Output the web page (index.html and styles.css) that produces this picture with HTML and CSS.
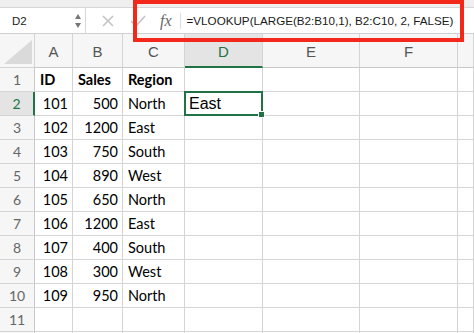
FILE: index.html
```html
<!DOCTYPE html>
<html lang="en">
<head>
    <meta charset="UTF-8">
    <meta name="viewport" content="width=device-width, initial-scale=1.0">
    <title>VLOOKUP LARGE</title>
    <link rel="stylesheet" href="styles.css">
</head>
<body>
    <div class="top-strip"></div>
    <div class="formula-bar">
        <div class="name-box">
            <span class="cell-ref">D2</span>
            <span class="spinner">
                <span class="arrow-up"></span>
                <span class="arrow-down"></span>
            </span>
        </div>
        <div class="fb-buttons">
            <svg class="fb-icon" width="12" height="12" viewBox="0 0 12 12">
                <path d="M1 1 L11 11 M11 1 L1 11" stroke="#c4c4c4" stroke-width="1.6" fill="none"/>
            </svg>
            <svg class="fb-icon check" width="16" height="12" viewBox="0 0 16 12">
                <path d="M1 6 L6 11 L15 1" stroke="#c4c4c4" stroke-width="1.6" fill="none"/>
            </svg>
        </div>
        <div class="fx">fx</div>
        <div class="formula">=VLOOKUP(LARGE(B2:B10,1), B2:C10, 2, FALSE)</div>
    </div>
    <div class="highlight-box"></div>

    <div class="sheet">
        <div class="corner">
            <svg width="28" height="24" viewBox="0 0 28 24">
                <polygon points="28,0 28,24 0,24" fill="#dadada"/>
            </svg>
        </div>
        <div class="col-head">A</div>
        <div class="col-head">B</div>
        <div class="col-head">C</div>
        <div class="col-head active">D</div>
        <div class="col-head">E</div>
        <div class="col-head">F</div>
        <div class="col-head"></div>

        <div class="row-head">1</div>
        <div class="cell bold">ID</div>
        <div class="cell bold">Sales</div>
        <div class="cell bold">Region</div>
        <div class="cell"></div><div class="cell"></div><div class="cell"></div><div class="cell"></div>

        <div class="row-head active">2</div>
        <div class="cell num">101</div>
        <div class="cell num">500</div>
        <div class="cell">North</div>
        <div class="cell selected">East<span class="fill-handle"></span></div>
        <div class="cell"></div><div class="cell"></div><div class="cell"></div>

        <div class="row-head">3</div>
        <div class="cell num">102</div>
        <div class="cell num">1200</div>
        <div class="cell">East</div>
        <div class="cell"></div><div class="cell"></div><div class="cell"></div><div class="cell"></div>

        <div class="row-head">4</div>
        <div class="cell num">103</div>
        <div class="cell num">750</div>
        <div class="cell">South</div>
        <div class="cell"></div><div class="cell"></div><div class="cell"></div><div class="cell"></div>

        <div class="row-head">5</div>
        <div class="cell num">104</div>
        <div class="cell num">890</div>
        <div class="cell">West</div>
        <div class="cell"></div><div class="cell"></div><div class="cell"></div><div class="cell"></div>

        <div class="row-head">6</div>
        <div class="cell num">105</div>
        <div class="cell num">650</div>
        <div class="cell">North</div>
        <div class="cell"></div><div class="cell"></div><div class="cell"></div><div class="cell"></div>

        <div class="row-head">7</div>
        <div class="cell num">106</div>
        <div class="cell num">1200</div>
        <div class="cell">East</div>
        <div class="cell"></div><div class="cell"></div><div class="cell"></div><div class="cell"></div>

        <div class="row-head">8</div>
        <div class="cell num">107</div>
        <div class="cell num">400</div>
        <div class="cell">South</div>
        <div class="cell"></div><div class="cell"></div><div class="cell"></div><div class="cell"></div>

        <div class="row-head">9</div>
        <div class="cell num">108</div>
        <div class="cell num">300</div>
        <div class="cell">West</div>
        <div class="cell"></div><div class="cell"></div><div class="cell"></div><div class="cell"></div>

        <div class="row-head">10</div>
        <div class="cell num">109</div>
        <div class="cell num">950</div>
        <div class="cell">North</div>
        <div class="cell"></div><div class="cell"></div><div class="cell"></div><div class="cell"></div>

        <div class="row-head">11</div>
        <div class="cell"></div><div class="cell"></div><div class="cell"></div>
        <div class="cell"></div><div class="cell"></div><div class="cell"></div><div class="cell"></div>

        <div class="row-head"></div>
        <div class="cell"></div><div class="cell"></div><div class="cell"></div>
        <div class="cell"></div><div class="cell"></div><div class="cell"></div><div class="cell"></div>
    </div>
</body>
</html>
```

FILE: styles.css
```css
body {
    margin: 0;
    padding: 0;
    background-color: #ffffff;
    font-family: "Liberation Sans", Arial, sans-serif;
    overflow: hidden;
    height: 333px;
}

.top-strip {
    height: 7px;
    background-color: #efefef;
    border-bottom: 1px solid #d6d6d6;
}

.formula-bar {
    display: flex;
    align-items: center;
    height: 25px;
    border-bottom: 1px solid #cfcfcf;
    background-color: #ffffff;
}

.name-box {
    display: flex;
    align-items: center;
    width: 86px;
    height: 100%;
    box-sizing: border-box;
    border-right: 1px solid #d6d6d6;
    padding-left: 12px;
}

.cell-ref {
    font-size: 11.5px;
    color: #222222;
    flex: 1;
}

.spinner {
    display: flex;
    flex-direction: column;
    gap: 4px;
    margin-right: 4px;
}

.arrow-up {
    width: 0;
    height: 0;
    border-left: 3.5px solid transparent;
    border-right: 3.5px solid transparent;
    border-bottom: 5px solid #777777;
}

.arrow-down {
    width: 0;
    height: 0;
    border-left: 3.5px solid transparent;
    border-right: 3.5px solid transparent;
    border-top: 5px solid #777777;
}

.fb-buttons {
    display: flex;
    align-items: center;
    gap: 16px;
    box-sizing: border-box;
    width: 74px;
    padding-left: 16px;
}

.fx {
    font-family: "Liberation Serif", "Times New Roman", serif;
    font-style: italic;
    font-size: 16px;
    color: #666666;
    padding-right: 8px;
    border-right: 1px solid #dddddd;
    line-height: 16px;
}

.formula {
    font-size: 11.65px;
    color: #1a1a1a;
    padding-left: 6px;
    white-space: nowrap;
}

.highlight-box {
    position: absolute;
    left: 133px;
    top: 0;
    width: 331px;
    height: 42px;
    box-sizing: border-box;
    border: 4px solid #f2291a;
}

.sheet {
    display: grid;
    grid-template-columns: 35px 38px 50px 62px 78px 97px 98px 1fr;
    grid-template-rows: 34px;
    grid-auto-rows: 24px;
}

.sheet > div {
    box-sizing: border-box;
    border-right: 1px solid #d4d4d4;
    border-bottom: 1px solid #d4d4d4;
}

.corner {
    background-color: #f6f6f6;
    display: flex;
    align-items: flex-end;
    justify-content: flex-end;
    padding: 0 2px 3px 0;
}

.corner svg {
    display: block;
}

.col-head {
    background-color: #f6f6f6;
    color: #555555;
    font-size: 15px;
    display: flex;
    align-items: center;
    justify-content: center;
    padding-top: 2px;
    border-bottom-color: #c9c9c9 !important;
}

.col-head.active {
    background-color: #e4e4e4;
    color: #217346;
    border-bottom: 2px solid #217346 !important;
}

.row-head {
    background-color: #f6f6f6;
    color: #666666;
    font-family: Lato, "Liberation Sans", sans-serif;
    font-size: 14px;
    display: flex;
    align-items: center;
    justify-content: center;
    border-right-color: #c9c9c9 !important;
}

.row-head.active {
    background-color: #e4e4e4;
    color: #217346;
    border-right: 2px solid #217346 !important;
}

.cell {
    font-family: Lato, "Liberation Sans", sans-serif;
    font-size: 14.5px;
    color: #000000;
    display: flex;
    align-items: center;
    padding: 0 4px 0 5px;
    white-space: nowrap;
}

.cell.bold {
    font-weight: bold;
}

.cell.num {
    justify-content: flex-end;
}

.cell.selected {
    position: relative;
    font-family: "Liberation Sans", Arial, sans-serif;
    font-size: 16px;
    padding-left: 4px;
}

.cell.selected::before {
    content: "";
    position: absolute;
    left: -1px;
    top: -1px;
    right: -1px;
    bottom: -1px;
    border: 2px solid #217346;
}

.fill-handle {
    position: absolute;
    right: -3px;
    bottom: -3px;
    width: 5px;
    height: 5px;
    background-color: #217346;
    border: 1px solid #ffffff;
}
```
